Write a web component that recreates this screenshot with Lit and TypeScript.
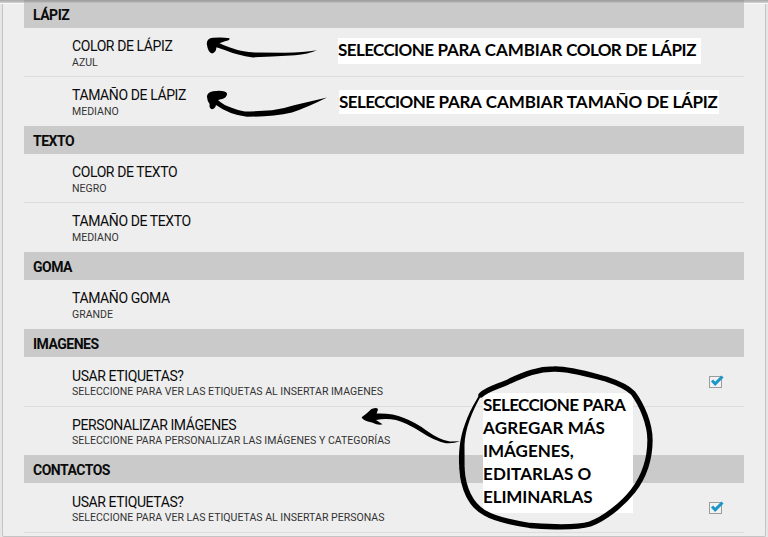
import { LitElement, html, css, svg, nothing } from "lit";
import { customElement } from "lit/decorators.js";
import { classMap } from "lit/directives/class-map.js";

interface Item { title: string; summary: string; checked?: boolean }
interface Section { title: string; items: Item[]; roomy?: boolean }

const SECTIONS: Section[] = [
  { title: "LÁPIZ", items: [
    { title: "COLOR DE LÁPIZ", summary: "AZUL" },
    { title: "TAMAÑO DE LÁPIZ", summary: "MEDIANO" },
  ] },
  { title: "TEXTO", items: [
    { title: "COLOR DE TEXTO", summary: "NEGRO" },
    { title: "TAMAÑO DE TEXTO", summary: "MEDIANO" },
  ] },
  { title: "GOMA", items: [{ title: "TAMAÑO GOMA", summary: "GRANDE" }] },
  { title: "IMAGENES", roomy: true, items: [
    { title: "USAR ETIQUETAS?", summary: "SELECCIONE PARA VER LAS ETIQUETAS AL INSERTAR IMAGENES", checked: true },
    { title: "PERSONALIZAR IMÁGENES", summary: "SELECCIONE PARA PERSONALIZAR LAS IMÁGENES Y CATEGORÍAS" },
  ] },
  { title: "CONTACTOS", roomy: true, items: [
    { title: "USAR ETIQUETAS?", summary: "SELECCIONE PARA VER LAS ETIQUETAS AL INSERTAR PERSONAS", checked: true },
  ] },
];

const STROKES = [
  // arrow to the pen colour
  "M206.8 44 Q206.5 38.5 213 37.8 Q222 36.8 229.5 38.3 Q230.2 40 225 41.3 L219.5 43.2 Q224 45.5 230 47.5 Q242 52 255 52.6 L285 52.8 Q303 52.4 317 50.2 Q308 54.3 295 55.2 L272 56.6 L253 57.4 Q237 55.2 226 50.5 L216.5 47.2 Q216 52.5 212 53.5 Q208 52.5 206.8 44 Z",
  // arrow to the pen size
  "M207 97 Q206.6 92.5 213 91.2 Q225.5 89.8 227 93.5 Q227.5 98 220 99.6 L218 100 Q223 105.2 233 108.2 Q243 112 250 111.5 L272 110.2 Q284 108.6 294 105.2 L327 97.5 Q306 108 292 112.4 Q272 116.7 247 116.8 Q229 114.6 216 105 Q215.5 108.5 212 109.2 Q209 108.8 209.6 104 Q207.2 101 207 97 Z",
  // arrow to the image options
  "M361.6 417.2 Q366 414.3 371.5 409 Q378 406.8 378 409.6 L376.6 413.6 Q392 413 404 418 Q416 422.6 426 430.2 Q440 440.2 450 441.6 L460 441.2 Q453 443.9 446 443.2 Q434 440.8 421 432 Q406 422.5 396 420 Q386 418.2 376 420 L382.5 424.3 Q379 425.8 372 422.6 Q362.5 420.3 361.6 417.2 Z",
];

// letter fitting of the words in the notes
const TRACKING: Record<string, number> = {
  SELECCIONE: -0.6, PARA: -0.25, CAMBIAR: -0.1, COLOR: -0.6, DE: -0.4, "LÁPIZ": -0.3,
  AGREGAR: 0.2, EDITARLAS: 0.1, ELIMINARLAS: -0.1,
};

@customElement("app-root")
export class AppRoot extends LitElement {
  static styles = css`
    :host { display: block; position: relative; width: 768px; height: 537px; overflow: hidden;
      background: #e6e6e6; font-family: Roboto, "Liberation Sans", sans-serif; color: #0b0b0b; }
    * { box-sizing: border-box; }
    .panel { height: 537px; margin: 0 2px; border: 1px solid #c4c4c4; border-top: 0;
      background: #eee; border-radius: 2px; padding: 0 21px; }
    .edge { position: absolute; left: 0; top: 0; width: 768px; height: 4px;
      background: linear-gradient(#aeaeae 0 1px, #bcbcbc 1px 2px, #cbcbcb 2px 3px, #fafafa 3px 4px); }
    .list { position: relative; }
    .head { height: 28px; padding: 2px 0 0 9px; background: #cacaca; display: flex; align-items: center;
      font-size: 14px; letter-spacing: -0.5px; font-weight: 700; line-height: 16px; }
    .first { background: linear-gradient(#a2a2a2 0 1px, #a8a8a8 1px 2px, #bcbcbc 2px 3px, #cacaca 3px); }
    .row { height: 49px; padding: 9px 20px 0 48px; display: flex; justify-content: space-between; }
    .line { border-bottom: 1px solid #dcdcdc; }
    .roomy .row { height: 48px; }
    .roomy .row.line { height: 50px; padding-top: 10px; }
    .title { font-size: 14px; letter-spacing: -0.4px; line-height: 18px; }
    .sum { font-size: 10.55px; line-height: 16px; color: #333; }
    .roomy .sum { line-height: 13px; }
    .check { width: 16px; height: 16px; margin-top: 6px; }
    .ink { position: absolute; left: 0; top: 0; width: 768px; height: 537px; }
    .note { position: absolute; background: #fff; color: #000; font-family: Lato, Carlito, sans-serif;
      font-weight: 700; font-size: 17px; white-space: nowrap; }
    .n1 { left: 338px; top: 38px; width: 363px; height: 26px; line-height: 24px; }
    .n2 { left: 339px; top: 90px; width: 380px; height: 24px; line-height: 24px; }
    .n3 { left: 483px; top: 393px; width: 150px; height: 120px; line-height: 23px; }
  `;

  private check() {
    return svg`<svg class="check" viewBox="0 0 16 16">
      <rect x="1.5" y="3.5" width="12" height="11" fill="#f2f2f2" stroke="#9c9c9c"/>
      <path d="M4 7.5 L7.2 10.8 L14.5 3.5" fill="none" stroke="#1b96c8" stroke-width="3"/></svg>`;
  }

  private note(cls: string, lines: string[]) {
    return html`<div class="note ${cls}">${lines.map((l) => html`<div>${l.split(" ").map((w, i) =>
      html`${i ? " " : ""}<span style="letter-spacing:${TRACKING[w] ?? 0}px">${w}</span>`)}</div>`)}</div>`;
  }

  render() {
    return html`
      <div class="edge"></div>
      <div class="panel"><div class="list">
        ${SECTIONS.map((s, si) => html`<section class=${classMap({ roomy: !!s.roomy })}>
          <div class="head ${si === 0 ? "first" : ""}">${s.title}</div>
          ${s.items.map((it, i) => html`
            <div class="row ${i < s.items.length - 1 || si === SECTIONS.length - 1 ? "line" : ""}">
              <div><div class="title">${it.title}</div><div class="sum">${it.summary}</div></div>
              ${it.checked ? this.check() : nothing}
            </div>`)}</section>`)}
      </div></div>
      ${this.note("n1", ["SELECCIONE PARA CAMBIAR COLOR DE LÁPIZ"])}
      ${this.note("n2", ["SELECCIONE PARA CAMBIAR TAMAÑO DE LÁPIZ"])}
      ${this.note("n3", ["SELECCIONE PARA", "AGREGAR MÁS", "IMÁGENES,", "EDITARLAS O", "ELIMINARLAS"])}
      <svg class="ink" viewBox="0 0 768 537">
        ${STROKES.map((d) => svg`<path d=${d}/>`)}
        <path fill="none" stroke="#000" stroke-width="5.3" stroke-linecap="round" stroke-linejoin="round"
          d="M481 395 C487 389 500 386 510 381 C525 374 538 369 554 369 C570 368.5 594 376 606 379 C618 383 627 387 633 393 C642 405 650 424 650 440 C650 462 643 478 633 491 C622 505 604 519 590 524 C573 529 545 526.5 530 525.5 C514 523 495 519 485 513 C470 505 463 487 462 469"/>
        <path d="M477.5 398 Q479 394 482 394 C472 411 465 429 464.5 445 L464.6 469 L459.4 469 C458 453 460 437 465 424 Q469 412 477.5 398 Z"/>
      </svg>`;
  }
}
